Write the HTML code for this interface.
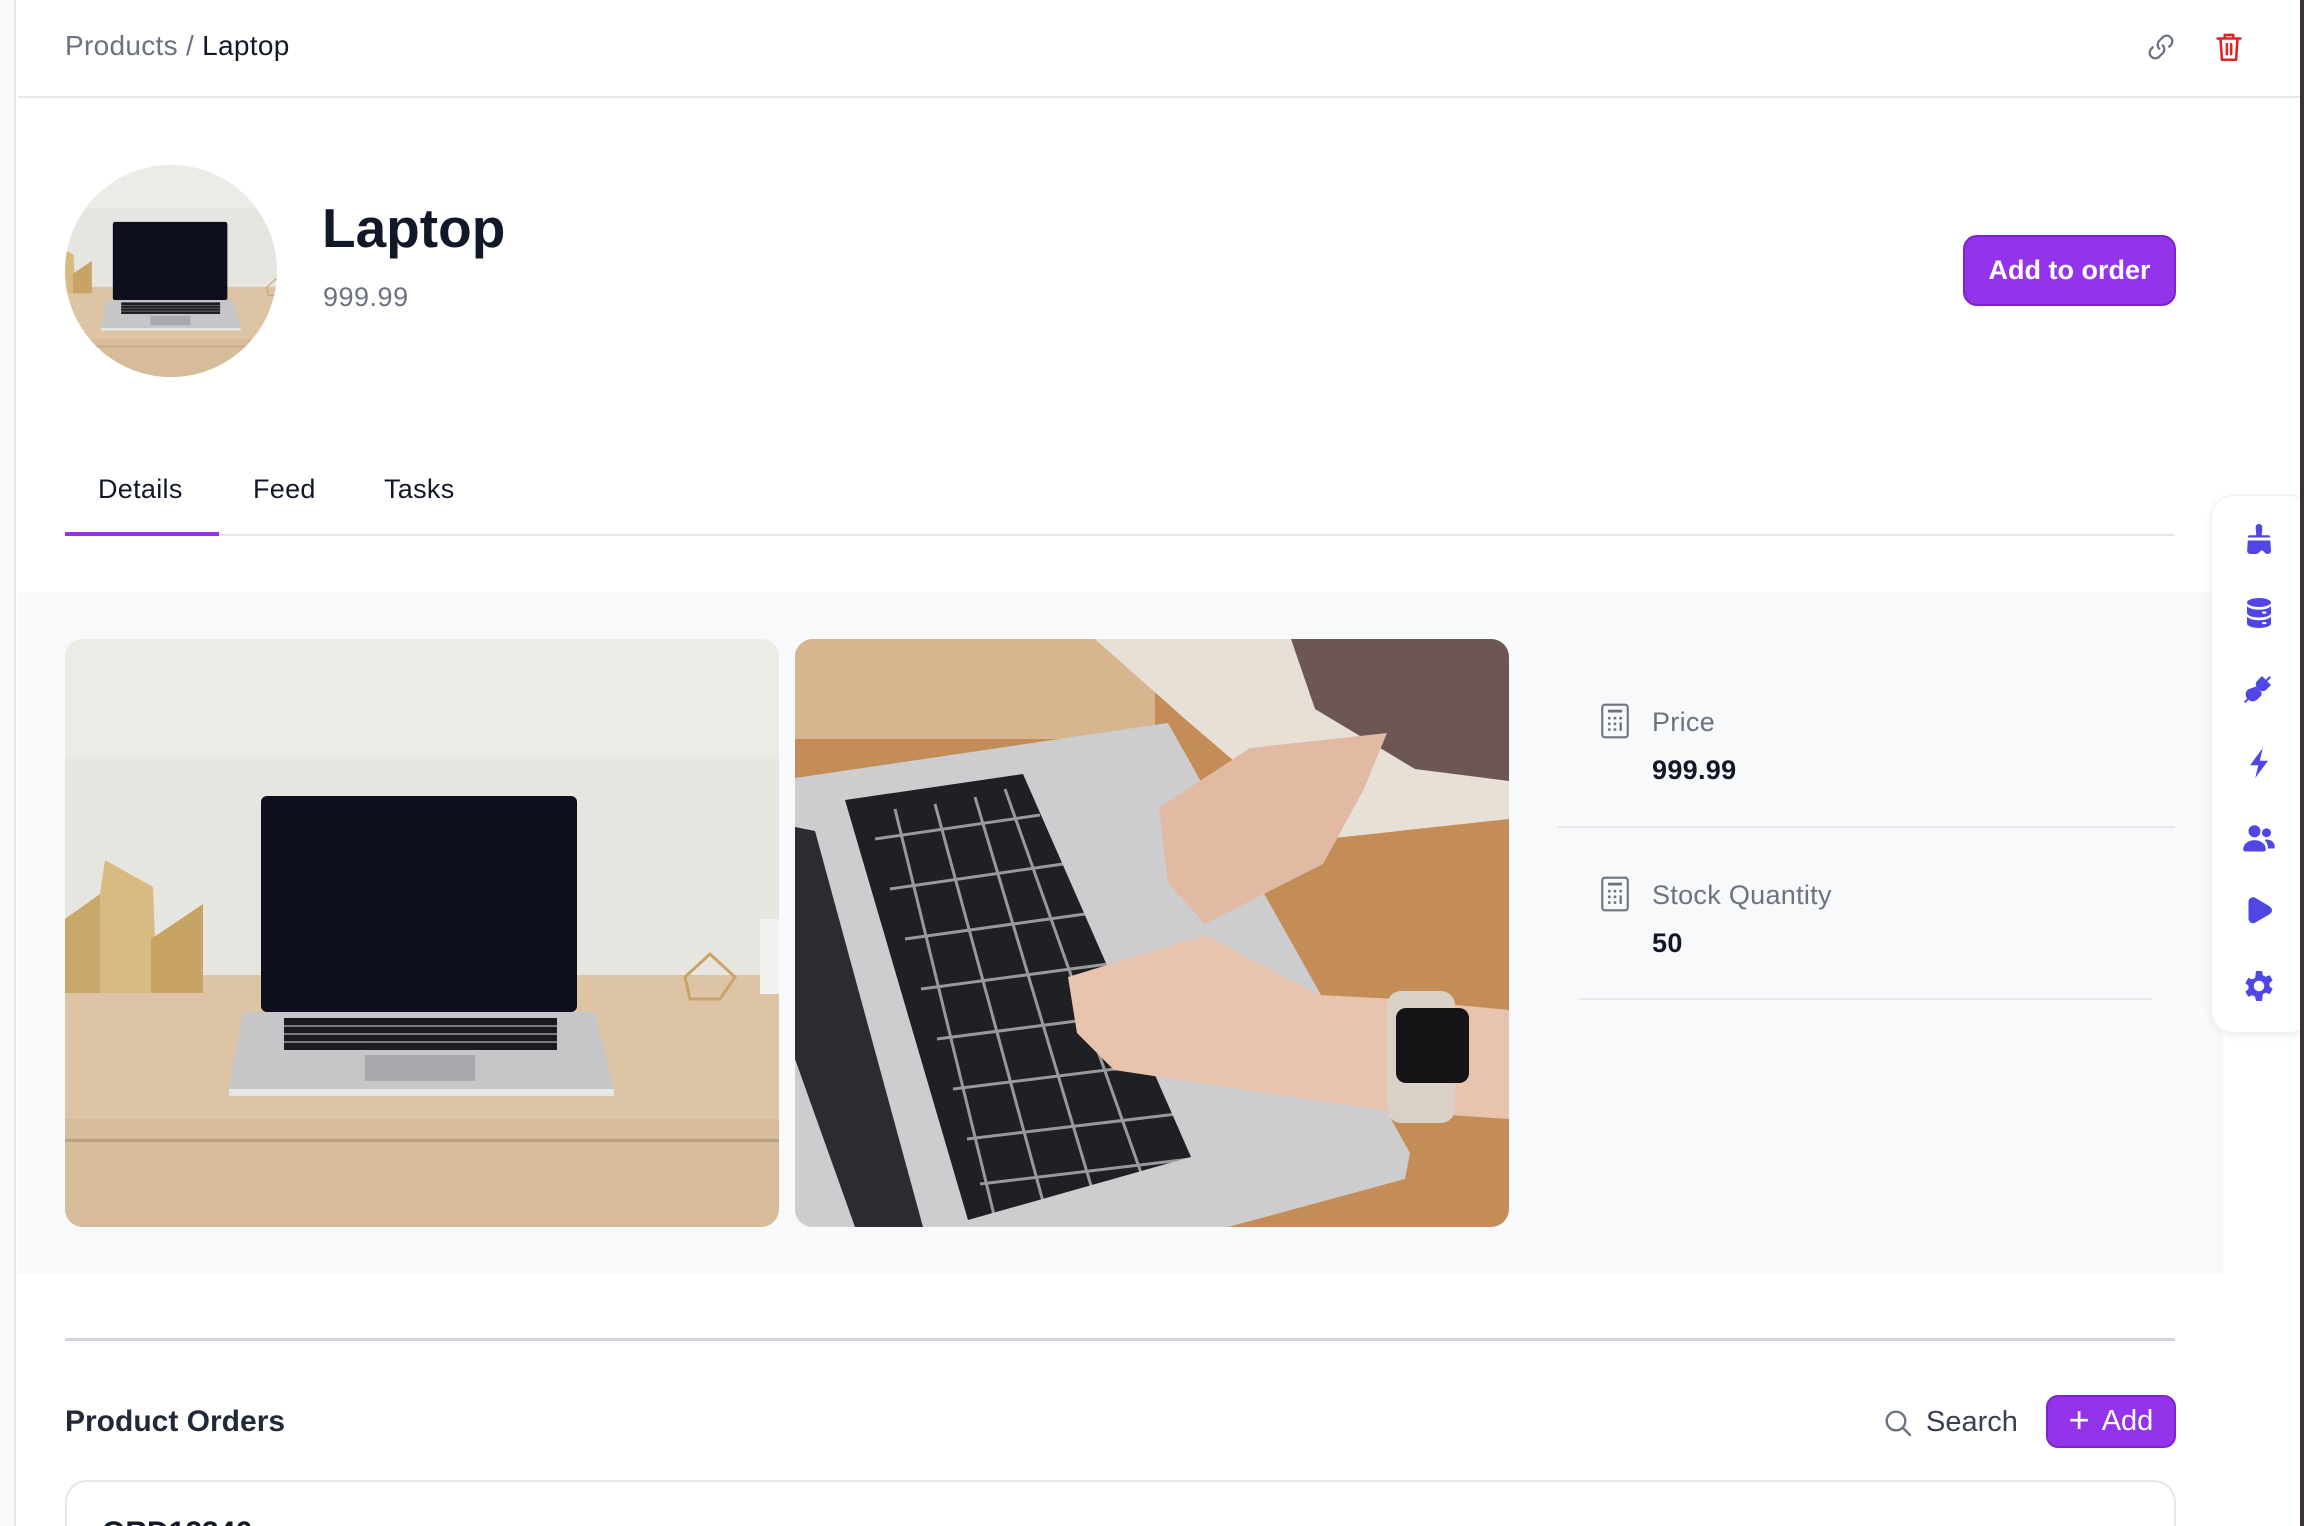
<!DOCTYPE html>
<html><head><meta charset="utf-8">
<style>
*{box-sizing:border-box;margin:0;padding:0}
html,body{width:2304px;height:1526px;overflow:hidden;background:#fff;font-family:"Liberation Sans",sans-serif;color:#111827;position:relative}
.abs{position:absolute}
#lstrip{left:0;top:0;width:16px;height:1526px;background:#f8f9fb;border-right:2px solid #e5e7eb}
#rstrip{left:2300px;top:0;width:4px;height:1526px;background:#3b3236}
#hdr{left:18px;top:0;width:2282px;height:98px;border-bottom:2px solid #e5e7eb}
.bc{left:65px;top:30px;font-size:28px;color:#6b7280;letter-spacing:.3px}
.bc b{font-weight:400;color:#111827}
#gray{left:18px;top:592px;width:2205px;height:682px;background:#f8f9fb}
.btn{background:#9333ea;color:#fff;border-radius:14px;border:2px solid #7e22ce;display:flex;align-items:center;justify-content:center;font-weight:600}
.tab{top:474px;font-size:27px;color:#111827;letter-spacing:.3px}
.img{border-radius:18px;overflow:hidden}
.lbl{font-size:27px;color:#6b7280;letter-spacing:.3px}
.val{font-size:27px;font-weight:700;color:#111827;letter-spacing:.3px}
#side{left:2211px;top:495px;width:100px;height:538px;background:#fff;border-radius:22px;box-shadow:0 2px 8px rgba(0,0,0,.08);border:1px solid #eef0f3}
.si{left:2241px;width:36px;height:36px}
</style></head><body>
<div class="abs" id="lstrip"></div>
<div class="abs" id="hdr"></div>
<div class="abs bc">Products / <b>Laptop</b></div>
<svg class="abs" style="left:2144px;top:30px" width="34" height="34" viewBox="0 0 24 24" fill="none" stroke="#6b7280" stroke-width="1.6" stroke-linecap="round"><path d="M13.2 10.8a4 4 0 0 1 0 5.6l-2.8 2.8a4 4 0 0 1-5.6-5.6l1.4-1.4"/><path d="M10.8 13.2a4 4 0 0 1 0-5.6l2.8-2.8a4 4 0 0 1 5.6 5.6l-1.4 1.4"/></svg>
<svg class="abs" style="left:2212px;top:30px" width="34" height="34" viewBox="0 0 24 24" fill="none" stroke="#dc2626" stroke-width="1.8" stroke-linecap="round" stroke-linejoin="round"><path d="M4 6h16M9 6V3.5h6V6M6 6l1 15h10l1-15M10.5 10v7M13.5 10v7"/></svg>

<svg class="abs" style="left:65px;top:165px;border-radius:50%" width="212" height="212" viewBox="64 0 585 585" preserveAspectRatio="xMidYMid slice">
<use href="#img1"/>
</svg>
<div class="abs" style="left:322px;top:196px;font-size:55px;font-weight:700;color:#111827">Laptop</div>
<div class="abs" style="left:323px;top:282px;font-size:27px;color:#6b7280;letter-spacing:.5px">999.99</div>
<div class="abs btn" style="left:1963px;top:235px;width:213px;height:71px;font-size:27px">Add to order</div>

<div class="abs tab" style="left:98px">Details</div>
<div class="abs tab" style="left:253px">Feed</div>
<div class="abs tab" style="left:384px">Tasks</div>
<div class="abs" style="left:65px;top:534px;width:2110px;height:2px;background:#e5e7eb"></div>
<div class="abs" style="left:65px;top:532px;width:154px;height:4px;background:#9333ea"></div>

<div class="abs" id="gray"></div>
<svg class="abs img" style="left:65px;top:639px" width="714" height="588" viewBox="0 0 714 588" preserveAspectRatio="none">
<defs><g id="img1">
<rect x="0" y="0" width="714" height="588" fill="#e7e5df"/>
<rect x="0" y="0" width="714" height="120" fill="#ecebe6"/>
<rect x="0" y="336" width="714" height="252" fill="#dcc4a4"/>
<rect x="0" y="480" width="714" height="20" fill="#d2b896" opacity=".6"/>
<rect x="0" y="500" width="714" height="3" fill="#b9a07f"/>
<rect x="354" y="500" width="3" height="88" fill="#b9a07f"/>
<rect x="0" y="503" width="714" height="85" fill="#d6bc98"/>
<polygon points="0,280 35,255 35,354 0,354" fill="#c9a86c"/>
<polygon points="35,255 40,221 88,248 92,354 35,354" fill="#d8bb82"/>
<polygon points="86,300 138,265 138,354 86,354" fill="#c7a466"/>
<polygon points="620,338 645,315 670,338 655,360 625,360" fill="none" stroke="#c9a46a" stroke-width="3"/>
<rect x="695" y="280" width="19" height="75" fill="#f2f1ee"/>
<rect x="196" y="157" width="316" height="216" rx="6" fill="#0d0f1c"/>
<polygon points="178,373 530,373 549,450 547,457 166,457 164,450" fill="#c6c6c8"/>
<rect x="164" y="450" width="385" height="7" fill="#e6e6e6"/>
<rect x="219" y="379" width="273" height="32" fill="#1a1b1f"/>
<g stroke="#9a9aa0" stroke-width="1.5"><line x1="219" y1="387" x2="492" y2="387"/><line x1="219" y1="395" x2="492" y2="395"/><line x1="219" y1="403" x2="492" y2="403"/></g>
<rect x="300" y="416" width="110" height="26" fill="#a9a9ad"/>
</g></defs>
<use href="#img1"/>
</svg>
<svg class="abs img" style="left:795px;top:639px" width="714" height="588" viewBox="0 0 714 588" preserveAspectRatio="none">
<rect width="714" height="588" fill="#c48d58"/>
<rect width="360" height="100" fill="#d7b68f"/>
<polygon points="300,0 714,0 714,180 530,200 390,80" fill="#e6e0d7"/>
<polygon points="496,0 714,0 714,142 620,130 520,70" fill="#6c5656"/>
<polygon points="0,139 373,84 615,514 610,540 433,588 0,588" fill="#cdcdcf"/>
<polygon points="0,188 20,192 128,588 60,588 0,420" fill="#2a2c30"/>
<polygon points="50,161 228,135 396,518 173,581" fill="#1f2023"/>
<g stroke="#cdcdcf" stroke-width="3" opacity=".7">
<line x1="80" y1="200" x2="245" y2="176"/><line x1="95" y1="250" x2="268" y2="225"/><line x1="110" y1="300" x2="290" y2="275"/><line x1="126" y1="350" x2="313" y2="325"/><line x1="142" y1="400" x2="336" y2="375"/><line x1="158" y1="450" x2="360" y2="425"/><line x1="172" y1="500" x2="382" y2="475"/><line x1="185" y1="545" x2="395" y2="520"/>
<line x1="100" y1="170" x2="200" y2="580" stroke-dasharray="0"/><line x1="140" y1="165" x2="250" y2="570"/><line x1="180" y1="158" x2="300" y2="560"/><line x1="210" y1="150" x2="350" y2="545"/>
</g>
<polygon points="364,169 455,109 592,94 569,150 528,225 455,262 410,285 373,244" fill="#e2b9a3"/>
<polygon points="273,338 410,296 524,356 601,360 714,371 714,480 592,472 319,431 282,394" fill="#e8c3ae"/>
<rect x="592" y="352" width="68" height="132" rx="14" fill="#d9d0c6"/>
<rect x="601" y="369" width="73" height="75" rx="10" fill="#141416"/>
</svg>

<svg class="abs" style="left:1598px;top:702px" width="34" height="38" viewBox="0 0 24 26" fill="none" stroke="#6b7280" stroke-width="1.5"><rect x="3" y="1.5" width="18" height="23" rx="2"/><path d="M7 6h10" stroke-width="2"/><g fill="#6b7280" stroke="none"><circle cx="8" cy="11" r="1"/><circle cx="12" cy="11" r="1"/><circle cx="16" cy="11" r="1"/><circle cx="8" cy="15" r="1"/><circle cx="12" cy="15" r="1"/><circle cx="8" cy="19" r="1"/><circle cx="12" cy="19" r="1"/><rect x="15.2" y="14" width="1.6" height="6"/></g></svg>
<div class="abs lbl" style="left:1652px;top:707px">Price</div>
<div class="abs val" style="left:1652px;top:755px">999.99</div>
<div class="abs" style="left:1558px;top:826px;width:617px;height:2px;background:#e5e7eb"></div>
<svg class="abs" style="left:1598px;top:875px" width="34" height="38" viewBox="0 0 24 26" fill="none" stroke="#6b7280" stroke-width="1.5"><rect x="3" y="1.5" width="18" height="23" rx="2"/><path d="M7 6h10" stroke-width="2"/><g fill="#6b7280" stroke="none"><circle cx="8" cy="11" r="1"/><circle cx="12" cy="11" r="1"/><circle cx="16" cy="11" r="1"/><circle cx="8" cy="15" r="1"/><circle cx="12" cy="15" r="1"/><circle cx="8" cy="19" r="1"/><circle cx="12" cy="19" r="1"/><rect x="15.2" y="14" width="1.6" height="6"/></g></svg>
<div class="abs lbl" style="left:1652px;top:880px">Stock Quantity</div>
<div class="abs val" style="left:1652px;top:928px">50</div>
<div class="abs" style="left:1580px;top:998px;width:572px;height:2px;background:#e5e7eb"></div>

<div class="abs" id="side"></div>
<svg class="abs si" style="top:521px" viewBox="0 0 24 24" fill="#4f46e5"><path d="M12 2c1.6 0 2.4 1.3 2.2 3l-.4 4.5H18c1.2 0 1.5.6 1.4 1.5H4.6c-.1-.9.2-1.5 1.4-1.5h4.2L9.8 5C9.6 3.3 10.4 2 12 2zM4.5 13h15l.5 6.5c.1 1.5-.9 2.5-2.3 2.5-1.3 0-2-1-2.7-1.8-.6-.7-1.6-.7-2.2 0-.7.8-1.4 1.8-2.8 1.8H6.3C5 22 4 21 4.1 19.5z"/></svg>
<svg class="abs si" style="top:595px" viewBox="0 0 24 24" fill="#4f46e5"><ellipse cx="12" cy="5" rx="8" ry="3"/><path d="M4 7.5c1.5 1.5 4.5 2.3 8 2.3s6.5-.8 8-2.3V12c0 1.7-3.6 3-8 3s-8-1.3-8-3zM4 14.5c1.5 1.5 4.5 2.3 8 2.3s6.5-.8 8-2.3V19c0 1.7-3.6 3-8 3s-8-1.3-8-3z"/><rect x="14" y="11" width="3" height="1.4" rx=".7" fill="#fff"/><rect x="14" y="18" width="3" height="1.4" rx=".7" fill="#fff"/></svg>
<svg class="abs si" style="top:670px" viewBox="0 0 24 24" fill="#4f46e5"><path d="M14 4l2.5 2.5 2.5-2.5 1 1-2.5 2.5L20 10l-3 3c-1.5 1.5-3.5 1.5-5 0l-1-1c-1.5-1.5-1.5-3.5 0-5z"/><path d="M10 11l3 3c1 1 1 2.5 0 3.5L11 19.5c-1.8 1.8-4.5 1.8-6 .3L3 22l-1-1 2.2-2c-1.5-1.5-1.5-4.2.3-6z"/></svg>
<svg class="abs si" style="top:745px" viewBox="0 0 24 24" fill="#4f46e5"><path d="M14.5 2L6 13.5h5.5L9.5 22 18 10.5h-5.5z"/></svg>
<svg class="abs si" style="top:820px" viewBox="0 0 24 24" fill="#4f46e5"><circle cx="9" cy="7.5" r="4"/><path d="M1.5 19.5c0-3.5 3.3-6 7.5-6s7.5 2.5 7.5 6c0 1-.5 1.5-1.5 1.5H3c-1 0-1.5-.5-1.5-1.5z"/><circle cx="17" cy="8.5" r="3"/><path d="M17.5 13c3 .2 5 2.2 5 4.8 0 .8-.4 1.2-1.2 1.2H18c0-2.3-.8-4.3-2.2-5.6.5-.2 1-.4 1.7-.4z"/></svg>
<svg class="abs si" style="top:893px" viewBox="0 0 24 24" fill="#4f46e5"><path d="M5 6c0-2.5 2.5-4 4.7-2.7l9.3 5.5c2.2 1.3 2.2 4.1 0 5.4l-9.3 5.5C7.5 21 5 19.5 5 17z"/></svg>
<svg class="abs si" style="top:968px" viewBox="0 0 24 24" fill="#4f46e5"><path fill-rule="evenodd" d="M10 2h4l.6 2.8 1.8 1 2.7-1 2 3.4-2.1 1.9v2l2.1 1.9-2 3.4-2.7-1-1.8 1L14 22h-4l-.6-2.8-1.8-1-2.7 1-2-3.4L5 13.9v-2L2.9 10l2-3.4 2.7 1 1.8-1zM12 8.5a3.5 3.5 0 1 0 0 7 3.5 3.5 0 0 0 0-7z"/></svg>

<div class="abs" style="left:65px;top:1338px;width:2110px;height:3px;background:#d1d5db"></div>
<div class="abs" style="left:65px;top:1405px;font-size:30px;font-weight:600;color:#1f2937">Product Orders</div>
<svg class="abs" style="left:1882px;top:1407px" width="32" height="32" viewBox="0 0 24 24" fill="none" stroke="#6b7280" stroke-width="1.8" stroke-linecap="round"><circle cx="10.5" cy="10.5" r="7"/><path d="M15.8 15.8L21 21"/></svg>
<div class="abs" style="left:1926px;top:1406px;font-size:29px;color:#374151">Search</div>
<div class="abs btn" style="left:2046px;top:1395px;width:130px;height:53px;font-size:29px;font-weight:400;border-radius:12px"><span style="font-size:36px;margin-right:12px;line-height:1;margin-top:-4px">+</span>Add</div>

<div class="abs" style="left:65px;top:1480px;width:2111px;height:46px;border:2px solid #e5e7eb;border-bottom:none;border-radius:22px 22px 0 0;background:#fff;overflow:hidden">
<div style="position:absolute;left:35px;top:34px;font-size:30px;font-weight:600;color:#111827">ORD12346</div>
</div>
<div class="abs" id="rstrip"></div>
</body></html>
